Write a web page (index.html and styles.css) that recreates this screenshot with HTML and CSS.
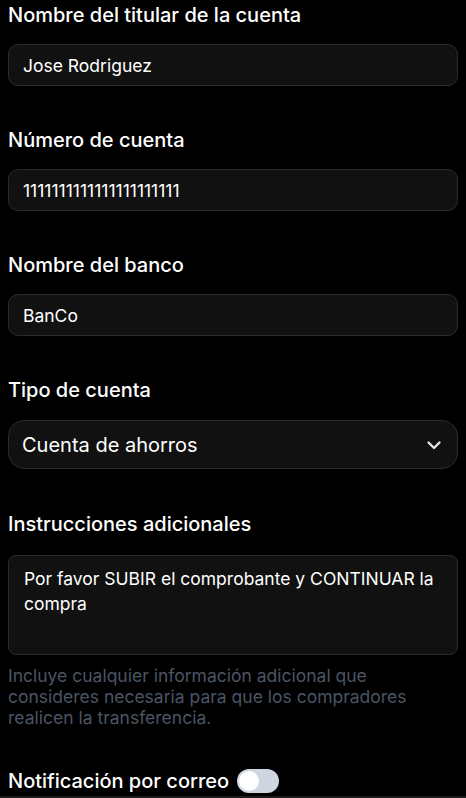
FILE: index.html
```html
<!DOCTYPE html>
<html lang="es">
<head>
<meta charset="utf-8">
<link rel="stylesheet" href="styles.css">
</head>
<body>
<form class="form">
  <div class="field">
    <label class="label">Nombre del titular de la cuenta</label>
    <div class="input">Jose Rodriguez</div>
  </div>
  <div class="field">
    <label class="label">Número de cuenta</label>
    <div class="input">1111111111111111111111</div>
  </div>
  <div class="field">
    <label class="label">Nombre del banco</label>
    <div class="input">BanCo</div>
  </div>
  <div class="field field-select">
    <label class="label">Tipo de cuenta</label>
    <div class="select">
      <span>Cuenta de ahorros</span>
      <svg class="chev" width="18" height="18" viewBox="0 0 18 18"><path d="M3.5 6.5l5.5 5.5 5.5-5.5" fill="none" stroke="#e5e5e5" stroke-width="2.4" stroke-linecap="round" stroke-linejoin="round"/></svg>
    </div>
  </div>
  <div class="field field-area">
    <label class="label">Instrucciones adicionales</label>
    <div class="textarea">Por favor SUBIR el comprobante y CONTINUAR la compra</div>
    <p class="help">Incluye cualquier información adicional que consideres necesaria para que los compradores realicen la transferencia.</p>
  </div>
  <div class="toggle-row">
    <span class="label">Notificación por correo</span>
    <span class="switch"><span class="knob"></span></span>
  </div>
  <div class="next"></div>
</form>
</body>
</html>
```
FILE: styles.css
```css
html, body {
  margin: 0;
  padding: 0;
  background: #000;
}
body {
  font-family: Inter, "Noto Sans", sans-serif;
  color: #fff;
}
.form {
  display: flex;
  flex-direction: column;
  padding: 0 8px;
}
.field {
  display: flex;
  flex-direction: column;
  margin-bottom: 39px;
}
.label {
  font-size: 20px;
  font-weight: 500;
  line-height: 30px;
  color: #fff;
}
.field .label {
  margin-bottom: 14px;
}
.field-select {
  margin-bottom: 40px;
}
.field-select .label {
  margin-bottom: 15px;
}
.field-area .label {
  margin-bottom: 16px;
}
.input {
  box-sizing: border-box;
  height: 42px;
  border: 1px solid #2b2b2b;
  border-radius: 10px;
  background: #111;
  padding: 0 14px;
  display: flex;
  align-items: center;
  font-size: 17.5px;
  color: #fff;
}
.select {
  box-sizing: border-box;
  height: 49px;
  border: 1px solid #2b2b2b;
  border-radius: 16px;
  background: #111;
  padding: 0 14px 0 13px;
  display: flex;
  align-items: center;
  justify-content: space-between;
  font-size: 20px;
  color: #fff;
}
.chev {
  display: block;
}
.textarea {
  box-sizing: border-box;
  height: 100px;
  border: 1px solid #2b2b2b;
  border-radius: 8px;
  background: #111;
  padding: 10px 15px;
  font-size: 17.5px;
  line-height: 25px;
  color: #fff;
}
.help {
  margin: 10px 0 0;
  font-size: 17.5px;
  line-height: 21px;
  letter-spacing: 0;
  color: #4b5563;
}
.field-area {
  margin-bottom: 0;
}
.toggle-row {
  display: flex;
  align-items: center;
  gap: 8px;
  margin-top: 38px;
}
.switch {
  position: relative;
  width: 42px;
  height: 24px;
  border-radius: 12px;
  background: #cfd6e0;
}
.knob {
  position: absolute;
  left: 2px;
  top: 2px;
  width: 20px;
  height: 20px;
  border-radius: 50%;
  background: #fff;
}
.next {
  margin: 0 -8px;
  height: 10px;
  background: #1a1a1a;
}
```
